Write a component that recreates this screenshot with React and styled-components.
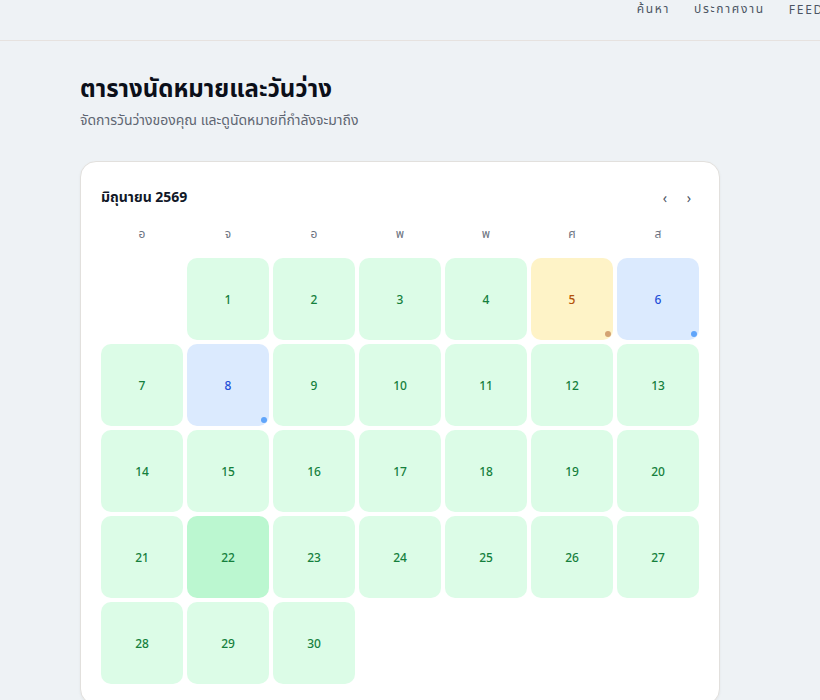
import React from "react";
import styled, { createGlobalStyle } from "styled-components";

const GlobalStyle = createGlobalStyle`
  html, body {
    margin: 0;
    padding: 0;
    background: #eef2f5;
    overflow-x: hidden;
  }
  body {
    font-family: "Noto Sans", "Noto Sans Thai", "Liberation Sans", sans-serif;
    color: #111827;
  }
`;

const WEEKDAYS = ["อ", "จ", "อ", "พ", "พ", "ศ", "ส"];

// status per day: free (green), pending (yellow), booked (blue), today (strong green)
const SPECIAL = {
  5: "pending",
  6: "booked",
  8: "booked",
  22: "today",
};

const TONES = {
  free: { bg: "#dcfce7", fg: "#15803d", dot: null },
  today: { bg: "#bbf7d0", fg: "#15803d", dot: null },
  pending: { bg: "#fef3c7", fg: "#b45309", dot: "#d4a373" },
  booked: { bg: "#dbeafe", fg: "#1d4ed8", dot: "#60a5fa" },
};

export default function App() {
  const cells = [null];
  for (let d = 1; d <= 30; d++) cells.push(d);

  return (
    <>
      <GlobalStyle />
      <Header>
        <HeaderInner>
          <Nav>
            <NavLink>ค้นหา</NavLink>
            <NavLink>ประกาศงาน</NavLink>
            <NavLink>FEED</NavLink>
          </Nav>
        </HeaderInner>
      </Header>

      <Main>
        <Title>ตารางนัดหมายและวันว่าง</Title>
        <Subtitle>จัดการวันว่างของคุณ และดูนัดหมายที่กำลังจะมาถึง</Subtitle>

        <Card>
          <CardHeader>
            <MonthLabel>มิถุนายน 2569</MonthLabel>
            <Arrows>
              <ArrowButton>‹</ArrowButton>
              <ArrowButton>›</ArrowButton>
            </Arrows>
          </CardHeader>

          <WeekRow>
            {WEEKDAYS.map((w, i) => (
              <WeekLabel key={i}>{w}</WeekLabel>
            ))}
          </WeekRow>

          <DayGrid>
            {cells.map((d, i) => {
              if (d === null) return <EmptyCell key={i} />;
              const tone = TONES[SPECIAL[d] || "free"];
              return (
                <DayCell key={i} $bg={tone.bg} $fg={tone.fg}>
                  {d}
                  {tone.dot && <Dot $color={tone.dot} />}
                </DayCell>
              );
            })}
          </DayGrid>
        </Card>
      </Main>
    </>
  );
}

const Header = styled.header`
  height: 40px;
  border-bottom: 1px solid #e6e2df;
  overflow: hidden;
`;

const HeaderInner = styled.div`
  width: calc(100% + 4px);
  height: 100%;
  display: flex;
  justify-content: flex-end;
  align-items: center;
`;

const Nav = styled.nav`
  display: flex;
  align-items: center;
  gap: 24px;
  margin-top: -22px;
`;

const NavLink = styled.a`
  font-size: 12px;
  letter-spacing: 1.7px;
  color: #4b5563;
  cursor: pointer;
`;

const Main = styled.main`
  padding: 32px 80px 40px;
`;

const Title = styled.h1`
  margin: 0;
  font-size: 24px;
  font-weight: 700;
  line-height: 30px;
  color: #0b0f19;
`;

const Subtitle = styled.p`
  margin: 7px 0 0;
  font-size: 14px;
  line-height: 20px;
  color: #5f6672;
`;

const Card = styled.section`
  margin-top: 31px;
  width: 640px;
  box-sizing: border-box;
  padding: 20px;
  background: #ffffff;
  border: 1px solid #e2e0dd;
  border-radius: 16px;
  box-shadow: 0 1px 3px rgba(0, 0, 0, 0.05);
`;

const CardHeader = styled.div`
  height: 30px;
  display: flex;
  align-items: center;
  justify-content: space-between;
  margin-bottom: 12px;
`;

const MonthLabel = styled.h2`
  margin: 0;
  font-size: 14px;
  font-weight: 700;
  color: #111827;
`;

const Arrows = styled.div`
  display: flex;
  gap: 8px;
  padding-right: 2px;
`;

const ArrowButton = styled.button`
  width: 16px;
  height: 20px;
  padding: 0;
  border: none;
  background: none;
  font-size: 14px;
  color: #4b5563;
  cursor: pointer;
  font-family: inherit;
`;

const WeekRow = styled.div`
  display: grid;
  grid-template-columns: repeat(7, 1fr);
  gap: 4px;
  height: 20px;
  align-items: center;
  margin-bottom: 14px;
`;

const WeekLabel = styled.div`
  text-align: center;
  font-size: 12px;
  color: #6b7280;
`;

const DayGrid = styled.div`
  display: grid;
  grid-template-columns: repeat(7, 1fr);
  gap: 4px;
`;

const EmptyCell = styled.div`
  aspect-ratio: 1;
`;

const DayCell = styled.div`
  position: relative;
  aspect-ratio: 1;
  display: flex;
  align-items: center;
  justify-content: center;
  border-radius: 10px;
  background: ${(p) => p.$bg};
  color: ${(p) => p.$fg};
  font-size: 12px;
  font-weight: 500;
  cursor: pointer;
`;

const Dot = styled.span`
  position: absolute;
  right: 2px;
  bottom: 3px;
  width: 6px;
  height: 6px;
  border-radius: 50%;
  background: ${(p) => p.$color};
`;
